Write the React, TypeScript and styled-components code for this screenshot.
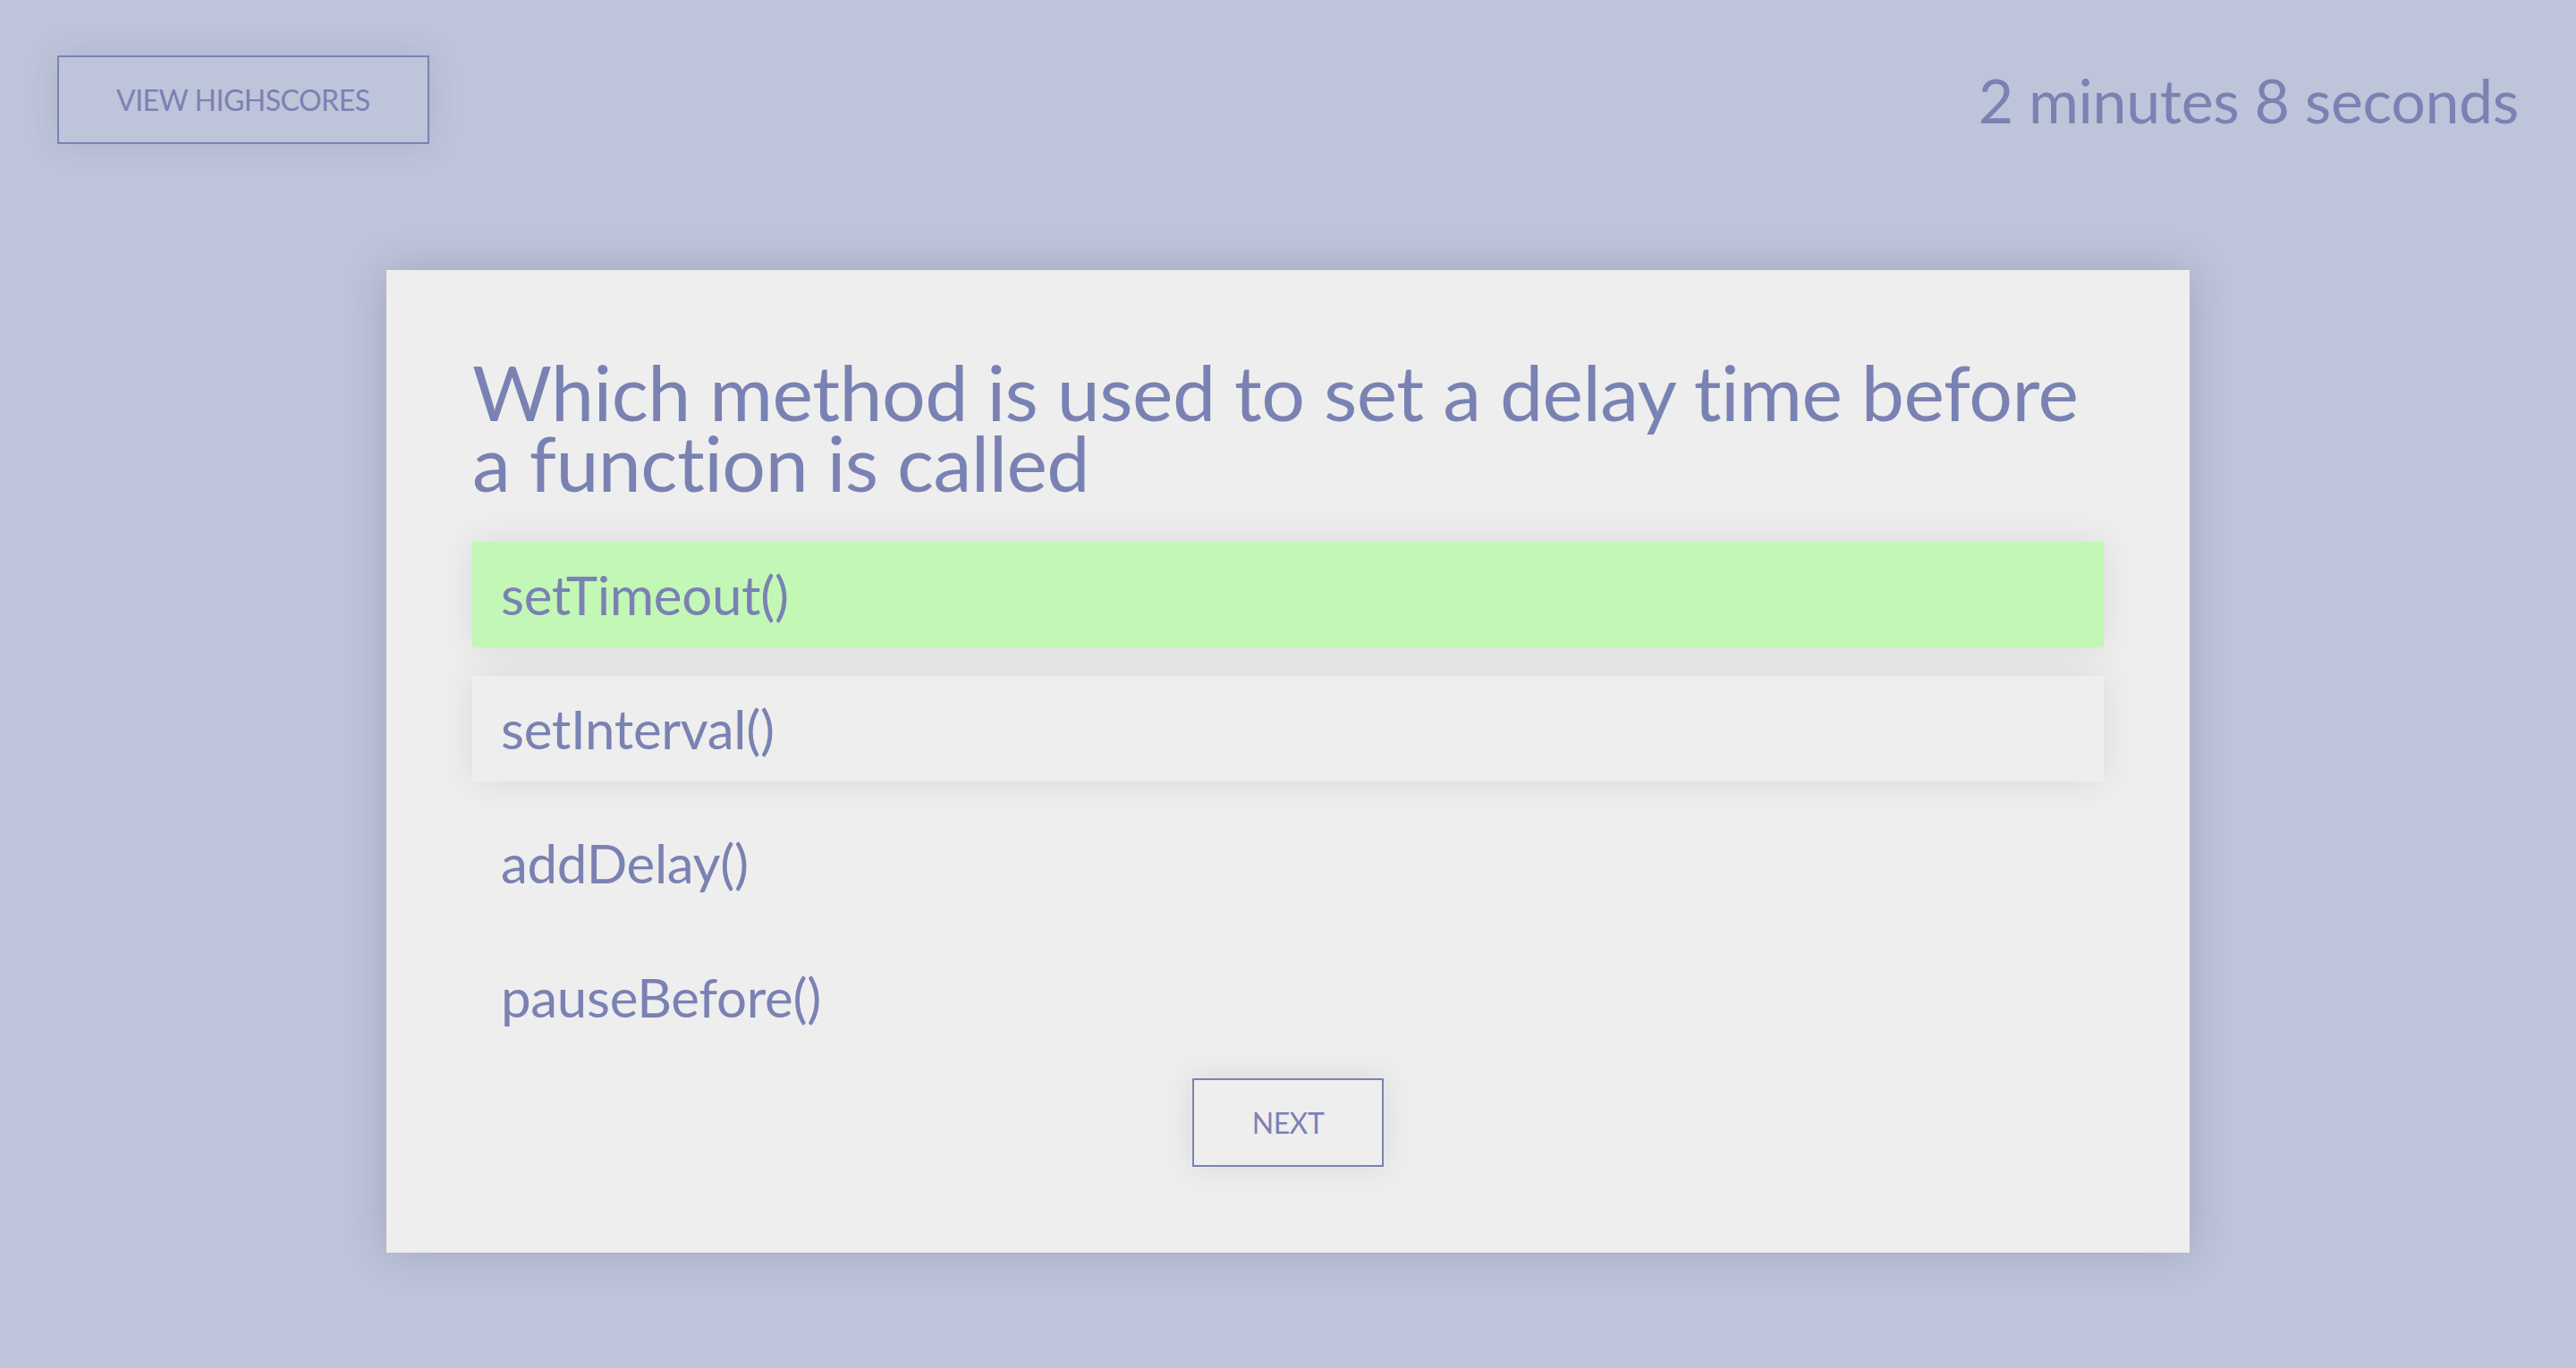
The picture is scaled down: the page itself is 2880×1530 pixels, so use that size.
import React from "react";
import styled, { createGlobalStyle } from "styled-components";

const GlobalStyle = createGlobalStyle`
  html, body {
    margin: 0;
    padding: 0;
    background: #bec4da;
  }
  body {
    font-family: Lato, "Open Sans", sans-serif;
    color: #7a82b3;
    overflow: hidden;
  }
  * { box-sizing: border-box; }
`;

const Page = styled.div`
  min-height: 1530px;
  background: #bec4da;
  padding-top: 62px;
  display: flex;
  flex-direction: column;
`;

const Header = styled.header`
  display: flex;
  justify-content: space-between;
  align-items: center;
  padding: 0 64px;
`;

const OutlineButton = styled.button<{ $px: number }>`
  font-family: Lato, sans-serif;
  font-size: 32px;
  line-height: 41px;
  color: #7a82b3;
  background: transparent;
  border: 2px solid #7a82b3;
  padding: 27px ${(p) => p.$px}px;
  text-transform: uppercase;
  box-shadow: 0 0 36px rgba(60, 64, 90, 0.12);
  cursor: pointer;
  letter-spacing: -0.5px;
`;

const Timer = styled.div`
  font-size: 68px;
  line-height: 82px;
  color: #7a82b3;
  letter-spacing: -0.3px;
`;

const Card = styled.main`
  width: 70vw;
  align-self: center;
  margin-top: 141px;
  background: #eeeeee;
  padding: 96px;
  display: flex;
  flex-direction: column;
  box-shadow: 0 0 44px rgba(40, 46, 80, 0.2);
`;

const Question = styled.h1`
  margin: 0 0 50px 0;
  font-weight: 400;
  font-size: 86px;
  line-height: 79px;
  color: #7a82b3;
  letter-spacing: -0.5px;
`;

const Options = styled.ul`
  list-style: none;
  margin: 0;
  padding: 0;
  display: flex;
  flex-direction: column;
  gap: 32px;
`;

const Option = styled.li<{ $state: "correct" | "hover" | "plain" }>`
  height: 118px;
  line-height: 118px;
  padding: 0 32px;
  font-size: 60px;
  color: #7a82b3;
  letter-spacing: -0.3px;
  background: ${(p) =>
    p.$state === "correct" ? "#c3f7b6" : p.$state === "hover" ? "#eeeeee" : "transparent"};
  box-shadow: ${(p) =>
    p.$state === "plain" ? "none" : "0 0 40px rgba(0, 0, 0, 0.09)"};
`;

const Footer = styled.div`
  margin-top: 32px;
  display: flex;
  justify-content: center;
`;

const options: { text: string; state: "correct" | "hover" | "plain" }[] = [
  { text: "setTimeout()", state: "correct" },
  { text: "setInterval()", state: "hover" },
  { text: "addDelay()", state: "plain" },
  { text: "pauseBefore()", state: "plain" },
];

export default function App() {
  return (
    <>
      <GlobalStyle />
      <Page>
        <Header>
          <OutlineButton $px={64}>View Highscores</OutlineButton>
          <Timer>2 minutes 8 seconds</Timer>
        </Header>
        <Card>
          <Question>Which method is used to set a delay time before a function is called</Question>
          <Options>
            {options.map((o) => (
              <Option key={o.text} $state={o.state}>
                {o.text}
              </Option>
            ))}
          </Options>
          <Footer>
            <OutlineButton $px={65}>Next</OutlineButton>
          </Footer>
        </Card>
      </Page>
    </>
  );
}
